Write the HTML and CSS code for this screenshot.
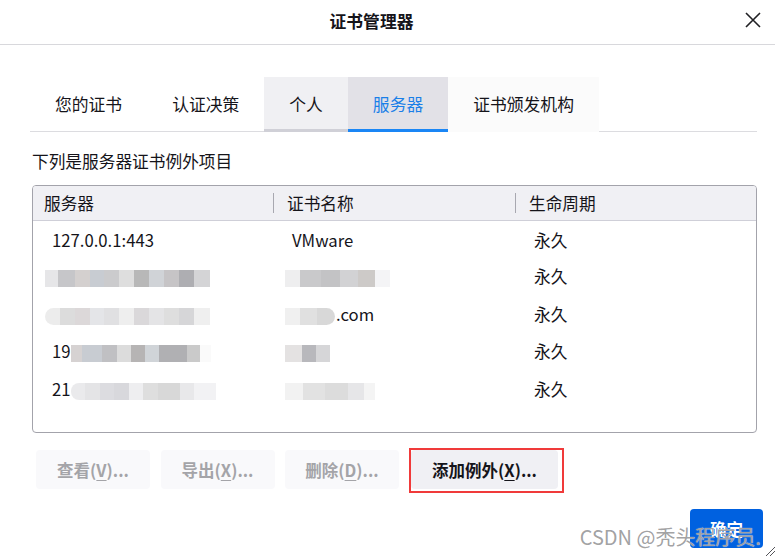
FILE: index.html
```html
<!DOCTYPE html>
<html lang="zh-CN">
<head>
    <meta charset="UTF-8">
    <title>证书管理器</title>
    <link rel="stylesheet" href="styles.css">
</head>
<body>
    <div class="dialog">
        <header class="titlebar">
            <span></span>
            <h1>证书管理器</h1>
            <button class="close" aria-label="关闭">
                <svg width="18" height="18" viewBox="0 0 18 18"><path d="M2 2L16 16M16 2L2 16" stroke="#202024" stroke-width="1.6" fill="none"/></svg>
            </button>
        </header>

        <main class="content">
            <nav class="tabs">
                <div class="tab">您的证书</div>
                <div class="tab">认证决策</div>
                <div class="tab hover">个人</div>
                <div class="tab active">服务器</div>
                <div class="tab faint">证书颁发机构</div>
            </nav>

            <p class="caption">下列是服务器证书例外项目</p>

            <div class="tree">
                <table>
                    <colgroup>
                        <col class="c1"><col class="c2"><col class="c3">
                    </colgroup>
                    <thead>
                        <tr>
                            <th>服务器</th>
                            <th class="split">证书名称</th>
                            <th class="split">生命周期</th>
                        </tr>
                    </thead>
                    <tbody>
                        <tr>
                            <td>127.0.0.1:443</td>
                            <td>VMware</td>
                            <td>永久</td>
                        </tr>
                        <tr>
                            <td><span class="mz mz-a"></span></td>
                            <td><span class="mz mz-b"></span></td>
                            <td>永久</td>
                        </tr>
                        <tr>
                            <td><span class="mz mz-c"></span></td>
                            <td><span class="mz mz-d"></span>.com</td>
                            <td>永久</td>
                        </tr>
                        <tr>
                            <td>19<span class="mz mz-e"></span></td>
                            <td><span class="mz mz-f"></span></td>
                            <td>永久</td>
                        </tr>
                        <tr>
                            <td>21<span class="mz mz-g"></span></td>
                            <td><span class="mz mz-h"></span></td>
                            <td>永久</td>
                        </tr>
                    </tbody>
                </table>
            </div>

            <div class="actions">
                <button class="btn" disabled>查看(<u>V</u>)...</button>
                <button class="btn" disabled>导出(<u>X</u>)...</button>
                <button class="btn" disabled>删除(<u>D</u>)...</button>
                <span class="marked">
                    <button class="btn">添加例外(<u>X</u>)...</button>
                </span>
            </div>
        </main>

        <footer class="footer">
            <button class="btn primary">确定</button>
        </footer>

        <div class="watermark">CSDN @秃头程序员.</div>
        <svg class="grip" width="10" height="10" viewBox="0 0 10 10"><path d="M10 1L1 10M10 5L5 10" stroke="#55555a" stroke-width="1" fill="none"/></svg>
    </div>
</body>
</html>
```

FILE: styles.css
```css
* {
    margin: 0;
    padding: 0;
    box-sizing: border-box;
}

body {
    background: #fff;
    font-family: "Noto Sans CJK SC", "Noto Sans", sans-serif;
    font-size: 16.7px;
    color: #15141a;
}

.dialog {
    position: relative;
    width: 775px;
    height: 556px;
    overflow: hidden;
}

/* Title bar */
.titlebar {
    display: grid;
    grid-template-columns: 1fr auto 1fr;
    align-items: center;
    height: 45px;
    border-bottom: 1px solid #d8d8dc;
}

.titlebar h1 {
    font-size: 16.8px;
    font-weight: bold;
    line-height: 22px;
    margin: -3px 32px 0 0;
}

.close {
    justify-self: end;
    margin-right: 13px;
    margin-top: -4px;
    width: 18px;
    height: 18px;
    border: none;
    background: none;
    display: flex;
}

/* Content */
.content {
    padding: 32px 18px 0 32px;
}

.tabs {
    display: flex;
    height: 55px;
    margin-left: -2px;
    border-bottom: 1px solid #dcdce0;
}

.tab {
    height: 55px;
    padding: 0 25px;
    font-size: 16.8px;
    line-height: 54px;
    margin-bottom: -1px;
    white-space: nowrap;
}

.tab.hover {
    background: #f0f0f3;
    box-shadow: inset 0 -3px 0 #d0d0d7;
}

.tab.active {
    background: #e2e1e7;
    color: #1a7fe8;
    box-shadow: inset 0 -3px 0 #1a86f5;
}

.tab.faint {
    background: #fbfbfb;
}

.caption {
    line-height: 22px;
    margin-top: 18px;
}

/* Tree */
.tree {
    margin-top: 13px;
    height: 248px;
    border: 1px solid #a3a3ab;
    border-radius: 4px;
    overflow: hidden;
}

.tree table {
    width: 100%;
    border-collapse: collapse;
    table-layout: fixed;
}

.tree col.c1 { width: 240px; }
.tree col.c2 { width: 242px; }

.tree th {
    height: 34px;
    background: #f0f0f4;
    border-bottom: 1px solid #cfcfd8;
    font-weight: normal;
    text-align: left;
    padding-left: 11px;
    line-height: 22px;
}

.tree th.split {
    padding-left: 14px;
    background: linear-gradient(#a8a8b0, #a8a8b0) left 7px / 1px 20px no-repeat, #f0f0f4;
}

.tree td {
    height: 37.5px;
    padding-left: 19px;
    line-height: 22px;
    white-space: nowrap;
}

.tree tbody tr:first-child td {
    padding-top: 2px;
}

/* redacted text */
.mz {
    display: inline-block;
    vertical-align: middle;
    height: 17px;
    filter: blur(0.7px);
}

.mz-a {
    width: 165px;
    margin-left: -7px;
    background: linear-gradient(90deg, #e6e6e8 0 8%, #c6c6c9 8% 18%, #d4d0cf 18% 27%, #c8ccd2 27% 36%, #cbcbcd 36% 45%, #dedede 45% 54%, #b8b8b8 54% 63%, #d0d3d7 63% 72%, #c6c4c6 72% 81%, #aeaeb2 81% 90%, #d4d4d6 90%);
}

.mz-b {
    width: 105px;
    margin-left: -7px;
    background: linear-gradient(90deg, #eeeeef 0 14%, #c9c9cb 14% 34%, #c3c3c5 34% 52%, #d2d2d4 52% 70%, #cdcac8 70% 86%, #f4f4f6 86%);
}

.mz-c {
    width: 165px;
    margin-left: -7px;
    border-radius: 9px 0 0 9px;
    background: linear-gradient(90deg, #ececec 0 9%, #dcdcdc 9% 18%, #dcd8d9 18% 27%, #e4e5e8 27% 36%, #e0e0e2 36% 45%, #eeeeee 45% 54%, #dad8da 54% 63%, #e4e4e6 63% 72%, #dedede 72% 81%, #d6d6d8 81% 90%, #efefef 90%);
}

.mz-d {
    width: 50px;
    margin-left: -7px;
    margin-right: 1px;
    border-radius: 0 9px 9px 0;
    background: linear-gradient(90deg, #f0f0f0 0 30%, #e0e0e0 30% 65%, #d8d8d8 65%);
}

.mz-e {
    width: 140px;
    background: linear-gradient(90deg, #d6d2d2 0 8%, #c8ccd2 8% 22%, #c0c0c3 22% 33%, #dcdcdc 33% 43%, #b6b4b4 43% 53%, #d0d4d8 53% 63%, #b0b0b3 63% 83%, #cacaca 83% 92%, #fafafa 92%);
}

.mz-f {
    width: 45px;
    margin-left: -7px;
    background: linear-gradient(90deg, #e4e2e2 0 38%, #b8b8bc 38% 70%, #d6d6d8 70%);
}

.mz-g {
    width: 145px;
    border-radius: 8px 0 0 8px;
    background: linear-gradient(90deg, #eaeaec 0 10%, #e4e4e6 10% 20%, #dcdce0 20% 30%, #d8d8dc 30% 40%, #eeeef0 40% 50%, #dedede 50% 60%, #d8d8d8 60% 75%, #e8e8ea 75% 85%, #f2f2f4 85%);
}

.mz-h {
    width: 90px;
    margin-left: -7px;
    background: linear-gradient(90deg, #f2f2f2 0 20%, #e2e2e2 20% 45%, #dcdcdc 45% 70%, #e6e6e8 70% 88%, #f4f4f4 88%);
}

/* Buttons */
.actions {
    display: flex;
    gap: 10.5px;
    margin-top: 17px;
    margin-left: 4px;
}

.btn {
    height: 39px;
    padding: 0 19px;
    border: none;
    border-radius: 4px;
    background: #f0f0f4;
    color: #15141a;
    font-family: inherit;
    font-size: 16.5px;
    font-weight: bold;
    white-space: nowrap;
}

.btn u {
    text-underline-offset: 3px;
    text-decoration-thickness: 1px;
}

.btn:disabled {
    background: #f9f9fb;
    color: #a4a4a8;
    width: 114px;
}

.marked {
    display: flex;
    margin: -2px 0 -2px -0.5px;
    padding: 0 4px 2px 0;
    border: 2px solid #f03a3a;
}

.marked .btn {
    width: 147px;
    padding: 0;
}

.footer {
    display: flex;
    justify-content: flex-end;
    padding: 18px 12px 0 0;
}

.primary {
    width: 73px;
    padding: 0;
    background: #0061e0;
    color: #fff;
}

/* overlays */
.watermark {
    position: absolute;
    right: 14px;
    bottom: 6px;
    font-size: 20px;
    line-height: 26px;
    color: rgba(150, 150, 152, 0.9);
    text-shadow: 0 0 1px #fff;
    white-space: nowrap;
}

.grip {
    position: absolute;
    right: 0;
    bottom: 0;
}
```
